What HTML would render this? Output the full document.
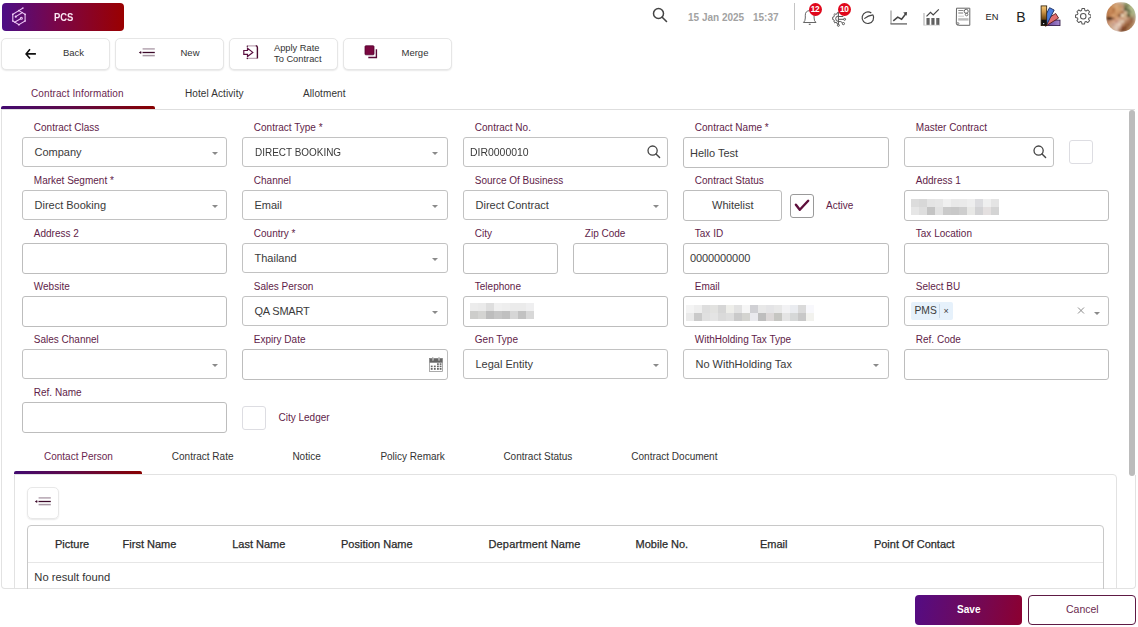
<!DOCTYPE html>
<html><head><meta charset="utf-8">
<style>
*{box-sizing:border-box;margin:0;padding:0}
html,body{width:1138px;height:627px;overflow:hidden;background:#fff;font-family:"Liberation Sans",sans-serif;color:#333}
.a{position:absolute}
.t{position:absolute;white-space:nowrap;line-height:1}
.btn{position:absolute;top:38px;height:32px;width:109px;border:1px solid #e6e6e6;border-radius:5px;background:#fff;box-shadow:0 1px 1.5px rgba(0,0,0,.09)}
.lbl{position:absolute;white-space:nowrap;line-height:1;font-size:10px;color:#5f1d49}
.box{position:absolute;height:30px;width:205px;border:1px solid #c2c2c2;border-radius:3px;background:#fff}
.val{position:absolute;white-space:nowrap;line-height:1;font-size:11px;color:#3a3a3a}
.caret{position:absolute;width:0;height:0;border-left:3px solid transparent;border-right:3px solid transparent;border-top:3px solid #8a8a8a}
.tab{position:absolute;white-space:nowrap;line-height:1;font-size:10px;letter-spacing:0.1px;color:#333}
.th{position:absolute;white-space:nowrap;line-height:1;font-size:11px;color:#2a2a2a;-webkit-text-stroke:0.25px #2a2a2a}
</style></head><body>
<div class="a" style="left:2px;top:3px;width:122px;height:28px;border-radius:4px;background:linear-gradient(90deg,#4c0e86 0%,#7a0648 45%,#9a0000 100%)"></div>
<svg class="a" style="left:11px;top:7px" width="17" height="19" viewBox="0 0 17 19">
 <g fill="none" stroke="#ecc4f4" stroke-width="1.1">
  <path d="M7.9 3.6 L14.1 7.4 L14.1 14 L7.9 17.7 L1.8 14 L1.8 7.4 Z"/>
  <path d="M7.9 3.6 L12 1 M4.75 9.65 L11.8 5.3 M3.1 15.5 L9.6 11.8"/>
  <circle cx="10.35" cy="11.3" r="1"/>
 </g>
 <g fill="#f0d0f8"><circle cx="4.75" cy="9.65" r="1.1"/><circle cx="7.9" cy="3.6" r="0.9"/><circle cx="7.9" cy="17.7" r="0.9"/><circle cx="1.8" cy="7.4" r="0.8"/><circle cx="14.1" cy="7.4" r="0.8"/><circle cx="1.8" cy="14" r="0.8"/><circle cx="14.1" cy="14" r="0.8"/><circle cx="12" cy="1" r="0.7"/></g>
</svg>
<div class="t" style="left:53.8px;top:11.6px;font-size:11.5px;font-weight:700;color:#fbe8f4;transform:scaleX(0.82);transform-origin:0 0">PCS</div>
<svg class="a" style="left:652px;top:7px" width="16" height="16" viewBox="0 0 16 16"><circle cx="6.5" cy="6.5" r="5" fill="none" stroke="#444" stroke-width="1.5"/><path d="M10.2 10.2 L14.5 14.5" stroke="#444" stroke-width="1.6" stroke-linecap="round"/></svg>
<div class="t" style="left:688px;top:12.5px;font-size:10px;font-weight:700;color:#a2a2a2">15 Jan 2025</div>
<div class="t" style="left:753px;top:12.5px;font-size:10px;font-weight:700;color:#a2a2a2">15:37</div>
<div class="a" style="left:794px;top:3px;width:1px;height:27px;background:#c4c4c4"></div>
<svg class="a" style="left:800px;top:8px" width="20" height="20" viewBox="0 0 20 20"><path d="M3.4 14.5 Q5.3 13.2 5.3 10 L5.3 7.2 Q5.3 2.8 9.7 2.6 Q14.1 2.8 14.1 7.2 L14.1 10 Q14.1 13.2 16 14.5 Z" fill="none" stroke="#666" stroke-width="1"/><path d="M8.8 16.3 L10.6 16.3" stroke="#666" stroke-width="1.2"/></svg>
<div class="a" style="left:809px;top:2.5px;width:13px;height:13px;border-radius:50%;background:#e0071b"></div>
<div class="t" style="left:810.8px;top:5px;font-size:8.3px;font-weight:700;color:#fff;letter-spacing:-0.4px">12</div>
<svg class="a" style="left:831px;top:10px" width="16" height="17" viewBox="0 0 16 17"><g fill="none" stroke="#555" stroke-width="1"><path d="M7.4 2.6 L6.3 2.7 L5.9 3.9 L4.9 4.4 L3.8 3.8 L2.9 4.7 L3.4 5.8 L2.9 6.8 L1.7 7.2 L1.7 9.5 L2.9 9.9 L3.4 10.9 L2.9 12 L3.8 12.9 L4.9 12.3 L5.9 12.8 L6.3 14 L7.4 14.1"/><path d="M7.4 6 A2.7 2.7 0 0 0 7.4 11.4"/><path d="M7.4 1.8 L7.4 14.3 M7.4 6.5 L12.3 6.5 M7.4 9.3 L12.6 9.3 M7.4 11.6 L9.8 11.6 L11.6 12.9"/><circle cx="13.6" cy="9.3" r="1"/><circle cx="12.4" cy="13.6" r="1.1"/><circle cx="7.4" cy="15.3" r="1"/></g></svg>
<div class="a" style="left:838px;top:2.5px;width:13px;height:13px;border-radius:50%;background:#e0071b"></div>
<div class="t" style="left:840.1px;top:5px;font-size:8.3px;font-weight:700;color:#fff;letter-spacing:-0.4px">10</div>
<svg class="a" style="left:860px;top:9px" width="16" height="16" viewBox="0 0 16 16"><path d="M11.31 4.01 A5.8 5.8 0 1 0 12.92 5.8" fill="none" stroke="#444" stroke-width="1.2"/><path d="M4.3 9.6 Q8.1 6.5 12.92 5.8" fill="none" stroke="#444" stroke-width="1.2"/></svg>
<svg class="a" style="left:889px;top:9px" width="20" height="17" viewBox="0 0 20 17"><path d="M2 1.5 L2 15" stroke="#aaa" stroke-width="1.4"/><path d="M1.5 14.9 L18 14.9" stroke="#777" stroke-width="1.5"/><path d="M4.3 11.8 L8.7 8.2 L12.6 10.2 L17 4.5" fill="none" stroke="#444" stroke-width="1.5"/><path d="M14.2 3.6 L18 3 L17.6 6.8 Z" fill="#444"/></svg>
<svg class="a" style="left:922px;top:8px" width="19" height="19" viewBox="0 0 19 19"><path d="M2 5 L2 17.2" stroke="#bbb" stroke-width="1.3"/><path d="M1.5 17.2 L18 17.2" stroke="#ccc" stroke-width="0.8"/><g fill="#555"><rect x="4.5" y="10" width="3.1" height="6.8"/><rect x="9.4" y="10" width="3.1" height="6.8"/><rect x="14.3" y="10" width="3.1" height="6.8"/></g><g stroke="#888" stroke-width="0.5"><path d="M6 10 L6 17 M10.9 10 L10.9 17 M15.8 10 L15.8 17"/></g><path d="M4.5 8.4 L8.5 4.3 L11.2 6.9 L16.8 1.3" fill="none" stroke="#444" stroke-width="1.2"/></svg>
<svg class="a" style="left:955px;top:7px" width="17" height="20" viewBox="0 0 17 20"><path d="M1.5 1.2 L14.8 1.2 L14.8 18.3 L3.5 18.3 Q1.3 18.3 1.3 16.3 Z" fill="#fff" stroke="#666" stroke-width="1"/><circle cx="2.9" cy="16.6" r="1" fill="none" stroke="#666" stroke-width="0.8"/><g stroke="#888" stroke-width="1"><path d="M3.3 3.5 L8.5 3.5"/></g><g stroke="#aaa" stroke-width="1.6"><path d="M3.3 6 L8.2 6"/></g><circle cx="11.2" cy="4.3" r="2" fill="none" stroke="#666" stroke-width="1"/><circle cx="11.6" cy="7.5" r="1.3" fill="none" stroke="#666" stroke-width="0.9"/><rect x="3.2" y="11.2" width="10.3" height="2.4" fill="#bbb"/><path d="M3.3 9.2 L9 9.2" stroke="#ccc" stroke-width="1"/></svg>
<div class="t" style="left:985.5px;top:12.8px;font-size:9.3px;font-weight:400;color:#222;letter-spacing:0px">EN</div>
<div class="t" style="left:1016.3px;top:10.4px;font-size:14px;color:#222">B</div>
<svg class="a" style="left:1040px;top:5px" width="22" height="22" viewBox="0 0 22 22"><defs><linearGradient id="gv" x1="0" y1="0" x2="0" y2="1"><stop offset="0" stop-color="#f4c878"/><stop offset="0.3" stop-color="#d09848"/><stop offset="0.68" stop-color="#6a4410"/><stop offset="0.72" stop-color="#111"/></linearGradient><linearGradient id="gp" x1="0" y1="0" x2="1" y2="0"><stop offset="0" stop-color="#5a3a90"/><stop offset="1" stop-color="#a888d0"/></linearGradient></defs><rect x="6.5" y="15.1" width="13.5" height="5.5" fill="url(#gp)" stroke="#2a1040" stroke-width="0.8"/><g transform="rotate(58 4 19)"><rect x="1.3" y="3.5" width="5.4" height="15.5" fill="#e07070" stroke="#5a1a1a" stroke-width="0.8"/></g><g transform="rotate(27 4 19.5)"><rect x="1.3" y="2" width="5.2" height="17" fill="#4a7ee0" stroke="#142a60" stroke-width="0.8"/></g><rect x="1.1" y="0.9" width="5.6" height="19.7" fill="url(#gv)" stroke="#2a1a05" stroke-width="0.8"/><circle cx="3.7" cy="18.6" r="0.7" fill="#fff"/></svg>
<svg class="a" style="left:1074.8px;top:8.3px" width="16.5" height="16.5" viewBox="0 0 18 18"><path d="M7.6 1.2 L10.4 1.2 L10.8 3.3 L12.1 3.9 L13.9 2.7 L15.9 4.7 L14.7 6.5 L15.3 7.8 L17.4 8.2 L17.4 11 L15.3 11.4 L14.7 12.7 L15.9 14.5 L13.9 16.5 L12.1 15.3 L10.8 15.9 L10.4 18 L7.6 18 L7.2 15.9 L5.9 15.3 L4.1 16.5 L2.1 14.5 L3.3 12.7 L2.7 11.4 L0.6 11 L0.6 8.2 L2.7 7.8 L3.3 6.5 L2.1 4.7 L4.1 2.7 L5.9 3.9 L7.2 3.3 Z" transform="translate(0 -0.6) scale(1 1)" fill="none" stroke="#555" stroke-width="1.1" stroke-linejoin="round"/><circle cx="9" cy="9" r="3" fill="none" stroke="#555" stroke-width="1.1"/></svg>
<svg class="a" style="left:1106px;top:2px" width="30" height="30" viewBox="0 0 30 30"><defs><clipPath id="cav"><circle cx="15" cy="15" r="14.9"/></clipPath><filter id="fb" filterUnits="userSpaceOnUse" x="-3" y="-3" width="36" height="36"><feGaussianBlur stdDeviation="0.9"/></filter></defs><g clip-path="url(#cav)"><g filter="url(#fb)"><rect x="0" y="0" width="3.05" height="3.05" fill="#c8a070"/><rect x="3" y="0" width="3.05" height="3.05" fill="#c8a070"/><rect x="6" y="0" width="3.05" height="3.05" fill="#c89870"/><rect x="9" y="0" width="3.05" height="3.05" fill="#d0a078"/><rect x="12" y="0" width="3.05" height="3.05" fill="#c8a080"/><rect x="15" y="0" width="3.05" height="3.05" fill="#b8a888"/><rect x="18" y="0" width="3.05" height="3.05" fill="#9a9a70"/><rect x="21" y="0" width="3.05" height="3.05" fill="#a0a878"/><rect x="24" y="0" width="3.05" height="3.05" fill="#a8b080"/><rect x="27" y="0" width="3.05" height="3.05" fill="#a8b080"/><rect x="0" y="3" width="3.05" height="3.05" fill="#c08050"/><rect x="3" y="3" width="3.05" height="3.05" fill="#c08050"/><rect x="6" y="3" width="3.05" height="3.05" fill="#d09a68"/><rect x="9" y="3" width="3.05" height="3.05" fill="#d8a878"/><rect x="12" y="3" width="3.05" height="3.05" fill="#c89868"/><rect x="15" y="3" width="3.05" height="3.05" fill="#c09070"/><rect x="18" y="3" width="3.05" height="3.05" fill="#7a7a50"/><rect x="21" y="3" width="3.05" height="3.05" fill="#a8b080"/><rect x="24" y="3" width="3.05" height="3.05" fill="#b0b888"/><rect x="27" y="3" width="3.05" height="3.05" fill="#b0b888"/><rect x="0" y="6" width="3.05" height="3.05" fill="#c08050"/><rect x="3" y="6" width="3.05" height="3.05" fill="#c88a58"/><rect x="6" y="6" width="3.05" height="3.05" fill="#b87848"/><rect x="9" y="6" width="3.05" height="3.05" fill="#d8a070"/><rect x="12" y="6" width="3.05" height="3.05" fill="#d0a070"/><rect x="15" y="6" width="3.05" height="3.05" fill="#c8a080"/><rect x="18" y="6" width="3.05" height="3.05" fill="#505838"/><rect x="21" y="6" width="3.05" height="3.05" fill="#98a070"/><rect x="24" y="6" width="3.05" height="3.05" fill="#b8c090"/><rect x="27" y="6" width="3.05" height="3.05" fill="#a8b088"/><rect x="0" y="9" width="3.05" height="3.05" fill="#b87848"/><rect x="3" y="9" width="3.05" height="3.05" fill="#d09060"/><rect x="6" y="9" width="3.05" height="3.05" fill="#c08050"/><rect x="9" y="9" width="3.05" height="3.05" fill="#d09868"/><rect x="12" y="9" width="3.05" height="3.05" fill="#c89060"/><rect x="15" y="9" width="3.05" height="3.05" fill="#a87048"/><rect x="18" y="9" width="3.05" height="3.05" fill="#d8b898"/><rect x="21" y="9" width="3.05" height="3.05" fill="#808860"/><rect x="24" y="9" width="3.05" height="3.05" fill="#a8b080"/><rect x="27" y="9" width="3.05" height="3.05" fill="#b0b890"/><rect x="0" y="12" width="3.05" height="3.05" fill="#b07040"/><rect x="3" y="12" width="3.05" height="3.05" fill="#c88858"/><rect x="6" y="12" width="3.05" height="3.05" fill="#d8a070"/><rect x="9" y="12" width="3.05" height="3.05" fill="#c89060"/><rect x="12" y="12" width="3.05" height="3.05" fill="#986040"/><rect x="15" y="12" width="3.05" height="3.05" fill="#e8d0b0"/><rect x="18" y="12" width="3.05" height="3.05" fill="#c8a880"/><rect x="21" y="12" width="3.05" height="3.05" fill="#605838"/><rect x="24" y="12" width="3.05" height="3.05" fill="#b0a878"/><rect x="27" y="12" width="3.05" height="3.05" fill="#a8a080"/><rect x="0" y="15" width="3.05" height="3.05" fill="#704020"/><rect x="3" y="15" width="3.05" height="3.05" fill="#503020"/><rect x="6" y="15" width="3.05" height="3.05" fill="#a87050"/><rect x="9" y="15" width="3.05" height="3.05" fill="#d8a078"/><rect x="12" y="15" width="3.05" height="3.05" fill="#d0a080"/><rect x="15" y="15" width="3.05" height="3.05" fill="#c89878"/><rect x="18" y="15" width="3.05" height="3.05" fill="#d0a888"/><rect x="21" y="15" width="3.05" height="3.05" fill="#b88868"/><rect x="24" y="15" width="3.05" height="3.05" fill="#906848"/><rect x="27" y="15" width="3.05" height="3.05" fill="#b09878"/><rect x="0" y="18" width="3.05" height="3.05" fill="#b88060"/><rect x="3" y="18" width="3.05" height="3.05" fill="#c89070"/><rect x="6" y="18" width="3.05" height="3.05" fill="#d8a888"/><rect x="9" y="18" width="3.05" height="3.05" fill="#c89080"/><rect x="12" y="18" width="3.05" height="3.05" fill="#d8b8a0"/><rect x="15" y="18" width="3.05" height="3.05" fill="#e0c8b0"/><rect x="18" y="18" width="3.05" height="3.05" fill="#b88868"/><rect x="21" y="18" width="3.05" height="3.05" fill="#a87050"/><rect x="24" y="18" width="3.05" height="3.05" fill="#986040"/><rect x="27" y="18" width="3.05" height="3.05" fill="#b89070"/><rect x="0" y="21" width="3.05" height="3.05" fill="#c89070"/><rect x="3" y="21" width="3.05" height="3.05" fill="#d0a888"/><rect x="6" y="21" width="3.05" height="3.05" fill="#c8a090"/><rect x="9" y="21" width="3.05" height="3.05" fill="#e0c0a8"/><rect x="12" y="21" width="3.05" height="3.05" fill="#e8d0c0"/><rect x="15" y="21" width="3.05" height="3.05" fill="#c09070"/><rect x="18" y="21" width="3.05" height="3.05" fill="#a06840"/><rect x="21" y="21" width="3.05" height="3.05" fill="#905838"/><rect x="24" y="21" width="3.05" height="3.05" fill="#a87850"/><rect x="27" y="21" width="3.05" height="3.05" fill="#c0a080"/><rect x="0" y="24" width="3.05" height="3.05" fill="#c8a080"/><rect x="3" y="24" width="3.05" height="3.05" fill="#c8a080"/><rect x="6" y="24" width="3.05" height="3.05" fill="#d8b8a0"/><rect x="9" y="24" width="3.05" height="3.05" fill="#e0c8b8"/><rect x="12" y="24" width="3.05" height="3.05" fill="#d0a890"/><rect x="15" y="24" width="3.05" height="3.05" fill="#905030"/><rect x="18" y="24" width="3.05" height="3.05" fill="#804828"/><rect x="21" y="24" width="3.05" height="3.05" fill="#a07048"/><rect x="24" y="24" width="3.05" height="3.05" fill="#b08868"/><rect x="27" y="24" width="3.05" height="3.05" fill="#b08868"/><rect x="0" y="27" width="3.05" height="3.05" fill="#d0b098"/><rect x="3" y="27" width="3.05" height="3.05" fill="#d0b098"/><rect x="6" y="27" width="3.05" height="3.05" fill="#d0b098"/><rect x="9" y="27" width="3.05" height="3.05" fill="#d8c0b0"/><rect x="12" y="27" width="3.05" height="3.05" fill="#a87050"/><rect x="15" y="27" width="3.05" height="3.05" fill="#704020"/><rect x="18" y="27" width="3.05" height="3.05" fill="#905838"/><rect x="21" y="27" width="3.05" height="3.05" fill="#b08058"/><rect x="24" y="27" width="3.05" height="3.05" fill="#b08058"/><rect x="27" y="27" width="3.05" height="3.05" fill="#b08058"/><circle cx="14" cy="13.5" r="1.1" fill="#7a4a20"/><circle cx="15.6" cy="13" r="0.7" fill="#f8f0e0"/><circle cx="22" cy="4" r="0.8" fill="#282818"/><circle cx="22.5" cy="8" r="0.9" fill="#282818"/><circle cx="24.5" cy="9.5" r="0.7" fill="#282818"/><circle cx="23.5" cy="13.5" r="0.8" fill="#282818"/><circle cx="8.5" cy="7.5" r="0.7" fill="#8a5028"/><circle cx="5" cy="11" r="0.7" fill="#8a5028"/><ellipse cx="4" cy="16.5" rx="2.5" ry="1.2" fill="#3e2414"/></g></g></svg>
<div class="btn" style="left:1px"></div>
<div class="btn" style="left:115px"></div>
<div class="btn" style="left:229px"></div>
<div class="btn" style="left:343px"></div>
<svg class="a" style="left:24px;top:47px" width="14" height="14" viewBox="0 0 14 14"><path d="M6 2.3 L2.1 6.9 L6 11.5 M2.4 6.9 L11.9 6.9" fill="none" stroke="#111" stroke-width="1.6"/></svg>
<svg class="a" style="left:138px;top:47px" width="18" height="10" viewBox="0 0 18 10"><path d="M4.6 1.9 L16.8 1.9" stroke="#b4a4b0" stroke-width="1.5"/><path d="M4.4 5.5 L16.8 5.5" stroke="#3c0a2a" stroke-width="1.3"/><path d="M3 5.5 L4.4 5.5" stroke="#c8b0c0" stroke-width="1"/><path d="M4.6 8.6 L16.8 8.6" stroke="#a898a4" stroke-width="1.5"/><path d="M0.8 5.5 L3.2 4 L3.2 7 Z" fill="#3c0a2a"/></svg>
<svg class="a" style="left:242px;top:44px" width="18" height="17" viewBox="0 0 18 17"><path d="M5.3 1.8 L14.5 1.8 M5.3 14.4 L15 14.4" stroke="#c0a8b8" stroke-width="1.3"/><path d="M13.8 1.6 Q15.4 1.8 15.4 3.6 L15.4 14.6" fill="none" stroke="#4a0a30" stroke-width="1.4"/><circle cx="5.3" cy="2.3" r="0.7" fill="#4a0a30"/><circle cx="5.3" cy="14.5" r="0.7" fill="#4a0a30"/><path d="M1.8 6.5 L5.5 6.5 L5.5 4.2 L10.8 8.4 L5.5 12.5 L5.5 10.3 L1.8 10.3 Z" fill="none" stroke="#5a1040" stroke-width="1.2" stroke-linejoin="miter"/></svg>
<svg class="a" style="left:363px;top:44px" width="16" height="16" viewBox="0 0 16 16"><rect x="2" y="1.8" width="9" height="9" rx="0.8" fill="#7a0840" stroke="#52002e" stroke-width="0.8"/><path d="M5.3 13.5 L13.4 13.5 L13.4 5.3" fill="none" stroke="#5a0a38" stroke-width="1.4"/></svg>
<div class="t" style="left:63px;top:48px;font-size:9.5px;color:#333">Back</div>
<div class="t" style="left:180.5px;top:48px;font-size:9.5px;color:#333">New</div>
<div class="t" style="left:274px;top:43.7px;font-size:9.3px;color:#333">Apply Rate</div>
<div class="t" style="left:274px;top:54.5px;font-size:9.3px;color:#333">To Contract</div>
<div class="t" style="left:401.5px;top:48px;font-size:9.5px;color:#333">Merge</div>
<div class="tab" style="left:31px;top:88.6px;color:#6b1f4f">Contract Information</div>
<div class="tab" style="left:185px;top:88.6px">Hotel Activity</div>
<div class="tab" style="left:303px;top:88.6px">Allotment</div>
<div class="a" style="left:1px;top:106px;width:154px;height:3px;border-radius:2px 2px 0 0;background:linear-gradient(90deg,#420a70,#5e0a48 45%,#880000)"></div>
<div class="a" style="left:1px;top:109px;width:1135px;height:480px;border:1px solid #e2e2e2;border-top-color:#dedede;border-radius:0 0 4px 4px"></div>
<div class="a" style="left:1135px;top:108px;width:3px;height:367px;background:#fff"></div>
<div class="a" style="left:1129px;top:109.5px;width:6px;height:366px;border-radius:3px;background:#bcbcbc"></div>
<div class="lbl" style="left:33.8px;top:123.4px">Contract Class</div>
<div class="box" style="left:22.0px;top:137px;width:205px;"></div>
<div class="val" style="left:34.5px;top:146.9px;">Company</div>
<div class="caret" style="left:212.0px;top:152px"></div>
<div class="lbl" style="left:253.8px;top:123.4px">Contract Type *</div>
<div class="box" style="left:242.0px;top:137px;width:206px;"></div>
<div class="val" style="left:254.5px;top:146.9px;transform:scaleX(0.905);transform-origin:0 0">DIRECT BOOKING</div>
<div class="caret" style="left:432.0px;top:152px"></div>
<div class="lbl" style="left:474.8px;top:123.4px">Contract No.</div>
<div class="box" style="left:463.0px;top:137px;width:205px;"></div>
<div class="val" style="left:470.0px;top:146.6px;transform:scaleX(0.95);transform-origin:0 0">DIR0000010</div>
<svg class="a" style="left:647px;top:145px" width="14" height="14" viewBox="0 0 14 14"><circle cx="5.6" cy="5.6" r="4.6" fill="none" stroke="#444" stroke-width="1.3"/><path d="M9 9 L12.6 12.6" stroke="#444" stroke-width="1.4" stroke-linecap="round"/></svg>
<div class="lbl" style="left:694.8px;top:123.4px">Contract Name *</div>
<div class="box" style="left:683.0px;top:137px;width:206px;height:31px;border-color:#bdbdbd"></div>
<div class="val" style="left:690.0px;top:147.9px;">Hello Test</div>
<div class="lbl" style="left:915.8px;top:123.4px">Master Contract</div>
<div class="box" style="left:904.0px;top:137px;width:150px;"></div>
<svg class="a" style="left:1033px;top:145px" width="14" height="14" viewBox="0 0 14 14"><circle cx="5.6" cy="5.6" r="4.6" fill="none" stroke="#444" stroke-width="1.3"/><path d="M9 9 L12.6 12.6" stroke="#444" stroke-width="1.4" stroke-linecap="round"/></svg>
<div class="a" style="left:1069px;top:140px;width:24px;height:23.5px;border:1px solid #dddde2;border-radius:3px"></div>
<div class="lbl" style="left:33.8px;top:176.4px">Market Segment *</div>
<div class="box" style="left:22.0px;top:190px;width:205px;"></div>
<div class="val" style="left:34.5px;top:199.9px;">Direct Booking</div>
<div class="caret" style="left:212.0px;top:205px"></div>
<div class="lbl" style="left:253.8px;top:176.4px">Channel</div>
<div class="box" style="left:242.0px;top:190px;width:206px;"></div>
<div class="val" style="left:254.5px;top:199.9px;">Email</div>
<div class="caret" style="left:432.0px;top:205px"></div>
<div class="lbl" style="left:474.8px;top:176.4px">Source Of Business</div>
<div class="box" style="left:463.0px;top:190px;width:205px;"></div>
<div class="val" style="left:475.5px;top:199.9px;">Direct Contract</div>
<div class="caret" style="left:653.0px;top:205px"></div>
<div class="lbl" style="left:694.8px;top:176.4px">Contract Status</div>
<div class="box" style="left:683px;top:190px;width:99px;height:31px;border-color:#bdbdbd"></div>
<div class="val" style="left:712px;top:199.8px">Whitelist</div>
<div class="a" style="left:790px;top:194px;width:24px;height:24px;border:1px solid #9a9a9a;border-radius:3px"></div>
<svg class="a" style="left:790px;top:194px" width="24" height="24" viewBox="0 0 24 24"><path d="M5.9 10.7 L9.8 15.8 L18.2 6.8" fill="none" stroke="#5e0f3c" stroke-width="2.4" stroke-linecap="round" stroke-linejoin="round"/></svg>
<div class="lbl" style="left:826px;top:201.2px">Active</div>
<div class="lbl" style="left:915.8px;top:176.4px">Address 1</div>
<div class="box" style="left:904.0px;top:190px;width:205px;height:31px;border-color:#bdbdbd"></div>
<div class="a" style="left:911px;top:199px;width:8px;height:8px;background:#dcdcdc"></div>
<div class="a" style="left:919px;top:199px;width:8px;height:8px;background:#d8d8d8"></div>
<div class="a" style="left:927px;top:199px;width:8px;height:8px;background:#e4e4e4"></div>
<div class="a" style="left:935px;top:199px;width:8px;height:8px;background:#e6e6e6"></div>
<div class="a" style="left:943px;top:199px;width:8px;height:8px;background:#f0f0f0"></div>
<div class="a" style="left:951px;top:199px;width:8px;height:8px;background:#e9e9e9"></div>
<div class="a" style="left:959px;top:199px;width:8px;height:8px;background:#eaeaea"></div>
<div class="a" style="left:967px;top:199px;width:8px;height:8px;background:#eeeeee"></div>
<div class="a" style="left:975px;top:199px;width:8px;height:8px;background:#dcdcdf"></div>
<div class="a" style="left:983px;top:199px;width:8px;height:8px;background:#efefef"></div>
<div class="a" style="left:991px;top:199px;width:8px;height:8px;background:#e4e4e4"></div>
<div class="a" style="left:911px;top:207px;width:8px;height:8px;background:#e6e6e6"></div>
<div class="a" style="left:919px;top:207px;width:8px;height:8px;background:#dedede"></div>
<div class="a" style="left:927px;top:207px;width:8px;height:8px;background:#c4c4c4"></div>
<div class="a" style="left:935px;top:207px;width:8px;height:8px;background:#e2e2e2"></div>
<div class="a" style="left:943px;top:207px;width:8px;height:8px;background:#cacaca"></div>
<div class="a" style="left:951px;top:207px;width:8px;height:8px;background:#c8c8c8"></div>
<div class="a" style="left:959px;top:207px;width:8px;height:8px;background:#cecece"></div>
<div class="a" style="left:967px;top:207px;width:8px;height:8px;background:#e8e8e6"></div>
<div class="a" style="left:975px;top:207px;width:8px;height:8px;background:#d2d2d4"></div>
<div class="a" style="left:983px;top:207px;width:8px;height:8px;background:#e4e0e0"></div>
<div class="a" style="left:991px;top:207px;width:8px;height:8px;background:#d4d4d4"></div>
<div class="lbl" style="left:33.8px;top:229.4px">Address 2</div>
<div class="box" style="left:22.0px;top:243px;width:205px;height:31px;border-color:#bdbdbd"></div>
<div class="lbl" style="left:253.8px;top:229.4px">Country *</div>
<div class="box" style="left:242.0px;top:243px;width:206px;"></div>
<div class="val" style="left:254.5px;top:252.9px;">Thailand</div>
<div class="caret" style="left:432.0px;top:258px"></div>
<div class="lbl" style="left:474.8px;top:229.4px">City</div>
<div class="box" style="left:463.0px;top:243px;width:95px;height:31px;border-color:#bdbdbd"></div>
<div class="lbl" style="left:584.8px;top:229.4px">Zip Code</div>
<div class="box" style="left:573.0px;top:243px;width:95px;height:31px;border-color:#bdbdbd"></div>
<div class="lbl" style="left:694.8px;top:229.4px">Tax ID</div>
<div class="box" style="left:683.0px;top:243px;width:206px;height:31px;border-color:#bdbdbd"></div>
<div class="val" style="left:690.0px;top:252.9px;letter-spacing:-0.1px">0000000000</div>
<div class="lbl" style="left:915.8px;top:229.4px">Tax Location</div>
<div class="box" style="left:904.0px;top:243px;width:205px;height:31px;border-color:#bdbdbd"></div>
<div class="lbl" style="left:33.8px;top:282.4px">Website</div>
<div class="box" style="left:22.0px;top:296px;width:205px;height:31px;border-color:#bdbdbd"></div>
<div class="lbl" style="left:253.8px;top:282.4px">Sales Person</div>
<div class="box" style="left:242.0px;top:296px;width:206px;"></div>
<div class="val" style="left:254.5px;top:305.9px;letter-spacing:-0.2px">QA SMART</div>
<div class="caret" style="left:432.0px;top:311px"></div>
<div class="lbl" style="left:474.8px;top:282.4px">Telephone</div>
<div class="box" style="left:463.0px;top:296px;width:205px;height:31px;border-color:#bdbdbd"></div>
<div class="a" style="left:470px;top:303px;width:8px;height:8px;background:#ececec"></div>
<div class="a" style="left:478px;top:303px;width:8px;height:8px;background:#eaeaea"></div>
<div class="a" style="left:486px;top:303px;width:8px;height:8px;background:#dedede"></div>
<div class="a" style="left:494px;top:303px;width:8px;height:8px;background:#f0f0f0"></div>
<div class="a" style="left:502px;top:303px;width:8px;height:8px;background:#eeeeee"></div>
<div class="a" style="left:510px;top:303px;width:8px;height:8px;background:#ebebeb"></div>
<div class="a" style="left:518px;top:303px;width:8px;height:8px;background:#ebebeb"></div>
<div class="a" style="left:526px;top:303px;width:8px;height:8px;background:#efeff0"></div>
<div class="a" style="left:470px;top:311px;width:8px;height:8px;background:#cdcdcb"></div>
<div class="a" style="left:478px;top:311px;width:8px;height:8px;background:#d4d4d2"></div>
<div class="a" style="left:486px;top:311px;width:8px;height:8px;background:#bdbdbd"></div>
<div class="a" style="left:494px;top:311px;width:8px;height:8px;background:#c6c6c6"></div>
<div class="a" style="left:502px;top:311px;width:8px;height:8px;background:#c0c0c0"></div>
<div class="a" style="left:510px;top:311px;width:8px;height:8px;background:#d6d6d6"></div>
<div class="a" style="left:518px;top:311px;width:8px;height:8px;background:#c2c2c2"></div>
<div class="a" style="left:526px;top:311px;width:8px;height:8px;background:#d8d8d8"></div>
<div class="lbl" style="left:694.8px;top:282.4px">Email</div>
<div class="box" style="left:683.0px;top:296px;width:206px;height:31px;border-color:#bdbdbd"></div>
<div class="a" style="left:686px;top:305px;width:8px;height:8px;background:#f4f4f4"></div>
<div class="a" style="left:694px;top:305px;width:8px;height:8px;background:#eeeeee"></div>
<div class="a" style="left:702px;top:305px;width:8px;height:8px;background:#dedede"></div>
<div class="a" style="left:710px;top:305px;width:8px;height:8px;background:#e2e2e0"></div>
<div class="a" style="left:718px;top:305px;width:8px;height:8px;background:#d6d6d6"></div>
<div class="a" style="left:726px;top:305px;width:8px;height:8px;background:#eeeeea"></div>
<div class="a" style="left:734px;top:305px;width:8px;height:8px;background:#e2e2e2"></div>
<div class="a" style="left:742px;top:305px;width:8px;height:8px;background:#f6f6f6"></div>
<div class="a" style="left:750px;top:305px;width:8px;height:8px;background:#d0d0d4"></div>
<div class="a" style="left:758px;top:305px;width:8px;height:8px;background:#e8e8e8"></div>
<div class="a" style="left:766px;top:305px;width:8px;height:8px;background:#e4e4e6"></div>
<div class="a" style="left:774px;top:305px;width:8px;height:8px;background:#e8e8e8"></div>
<div class="a" style="left:782px;top:305px;width:8px;height:8px;background:#f2f2f4"></div>
<div class="a" style="left:790px;top:305px;width:8px;height:8px;background:#eaecf0"></div>
<div class="a" style="left:798px;top:305px;width:8px;height:8px;background:#dadada"></div>
<div class="a" style="left:806px;top:305px;width:8px;height:8px;background:#f8f8fc"></div>
<div class="a" style="left:686px;top:313px;width:8px;height:8px;background:#eaeaea"></div>
<div class="a" style="left:694px;top:313px;width:8px;height:8px;background:#cacaca"></div>
<div class="a" style="left:702px;top:313px;width:8px;height:8px;background:#e0e0e0"></div>
<div class="a" style="left:710px;top:313px;width:8px;height:8px;background:#e4e4e4"></div>
<div class="a" style="left:718px;top:313px;width:8px;height:8px;background:#dadada"></div>
<div class="a" style="left:726px;top:313px;width:8px;height:8px;background:#dedede"></div>
<div class="a" style="left:734px;top:313px;width:8px;height:8px;background:#cacaca"></div>
<div class="a" style="left:742px;top:313px;width:8px;height:8px;background:#d4d4d0"></div>
<div class="a" style="left:750px;top:313px;width:8px;height:8px;background:#eaeaee"></div>
<div class="a" style="left:758px;top:313px;width:8px;height:8px;background:#bebebe"></div>
<div class="a" style="left:766px;top:313px;width:8px;height:8px;background:#dcd8d8"></div>
<div class="a" style="left:774px;top:313px;width:8px;height:8px;background:#c6c6c2"></div>
<div class="a" style="left:782px;top:313px;width:8px;height:8px;background:#e4e4e4"></div>
<div class="a" style="left:790px;top:313px;width:8px;height:8px;background:#d6d8d8"></div>
<div class="a" style="left:798px;top:313px;width:8px;height:8px;background:#c8c8c8"></div>
<div class="a" style="left:806px;top:313px;width:8px;height:8px;background:#f2f2ee"></div>
<div class="lbl" style="left:915.8px;top:282.4px">Select BU</div>
<div class="box" style="left:904.0px;top:296px;width:205px;"></div>
<div class="a" style="left:910.5px;top:302px;width:42.5px;height:18px;border-radius:2px;background:#e6f1fb"></div>
<div class="val" style="left:914.5px;top:306px;font-size:10.3px">PMS</div>
<div class="a" style="left:939px;top:304px;width:1px;height:14px;background:#c9d9ea"></div>
<div class="t" style="left:943.5px;top:306.5px;font-size:9px;color:#444">&#215;</div>
<svg class="a" style="left:1077px;top:307px" width="8" height="7" viewBox="0 0 8 7"><path d="M1 0.5 L7 6.5 M7 0.5 L1 6.5" stroke="#8c8c8c" stroke-width="1"/></svg>
<div class="caret" style="left:1094px;top:311.5px"></div>
<div class="lbl" style="left:33.8px;top:335.4px">Sales Channel</div>
<div class="box" style="left:22.0px;top:349px;width:205px;"></div>
<div class="caret" style="left:212.0px;top:364px"></div>
<div class="lbl" style="left:253.8px;top:335.4px">Expiry Date</div>
<div class="box" style="left:242.0px;top:349px;width:206px;height:31px;border-color:#bdbdbd"></div>
<svg class="a" style="left:429px;top:357px" width="14" height="15" viewBox="0 0 14 15"><rect x="0.6" y="1.5" width="12.8" height="13" fill="#fff" stroke="#888" stroke-width="0.7"/><rect x="0.6" y="1.5" width="12.8" height="4.2" fill="#666"/><path d="M3.8 0.3 L3.8 3.6 M10 0.3 L10 3.6" stroke="#fff" stroke-width="1.6"/><path d="M3.8 0.3 L3.8 3.6 M10 0.3 L10 3.6" stroke="#555" stroke-width="0.8"/><g fill="#666"><rect x="8" y="6.3" width="1.8" height="1.6"/><rect x="10.7" y="6.3" width="1.8" height="1.6"/><rect x="1.8" y="8.6" width="1.8" height="1.6"/><rect x="4.9" y="8.6" width="1.8" height="1.6"/><rect x="8" y="8.6" width="1.8" height="1.6"/><rect x="10.7" y="8.6" width="1.8" height="1.6"/><rect x="1.8" y="11" width="1.8" height="1.8"/><rect x="4.9" y="11" width="1.8" height="1.8"/><rect x="8" y="11" width="1.8" height="1.8"/><rect x="10.7" y="11" width="1.8" height="1.8"/></g></svg>
<div class="lbl" style="left:474.8px;top:335.4px">Gen Type</div>
<div class="box" style="left:463.0px;top:349px;width:205px;"></div>
<div class="val" style="left:475.5px;top:358.9px;">Legal Entity</div>
<div class="caret" style="left:653.0px;top:364px"></div>
<div class="lbl" style="left:694.8px;top:335.4px">WithHolding Tax Type</div>
<div class="box" style="left:683.0px;top:349px;width:206px;"></div>
<div class="val" style="left:695.5px;top:358.9px;">No WithHolding Tax</div>
<div class="caret" style="left:873.0px;top:364px"></div>
<div class="lbl" style="left:915.8px;top:335.4px">Ref. Code</div>
<div class="box" style="left:904.0px;top:349px;width:205px;height:31px;border-color:#bdbdbd"></div>
<div class="lbl" style="left:33.8px;top:388.4px">Ref. Name</div>
<div class="box" style="left:22.0px;top:402px;width:205px;height:31px;border-color:#bdbdbd"></div>
<div class="a" style="left:242px;top:406px;width:24px;height:23.5px;border:1px solid #dddde2;border-radius:3px"></div>
<div class="lbl" style="left:278.5px;top:412.6px">City Ledger</div>
<div class="tab" style="left:44px;top:451.9px;letter-spacing:0px;color:#6b1f4f">Contact Person</div>
<div class="tab" style="left:171.8px;top:451.9px;letter-spacing:0px">Contract Rate</div>
<div class="tab" style="left:292.4px;top:451.9px;letter-spacing:0px">Notice</div>
<div class="tab" style="left:380.4px;top:451.9px;letter-spacing:0px">Policy Remark</div>
<div class="tab" style="left:503.4px;top:451.9px;letter-spacing:0px">Contract Status</div>
<div class="tab" style="left:631.3px;top:451.9px;letter-spacing:0px">Contract Document</div>
<div class="a" style="left:14px;top:470.5px;width:128px;height:3px;border-radius:2px 2px 0 0;background:linear-gradient(90deg,#420a70,#5e0a48 45%,#880000)"></div>
<div class="a" style="left:14px;top:474px;width:1103px;height:120px;border:1px solid #e2e2e2;border-radius:0 4px 0 0"></div>
<div class="a" style="left:27px;top:487px;width:32px;height:32px;border:1px solid #e8e8e8;border-radius:5px;box-shadow:0 1px 1.5px rgba(0,0,0,.09)"></div>
<svg class="a" style="left:33.5px;top:496px" width="18" height="10" viewBox="0 0 18 10"><path d="M4.6 1.9 L16.8 1.9" stroke="#b4a4b0" stroke-width="1.5"/><path d="M4.4 5.5 L16.8 5.5" stroke="#3c0a2a" stroke-width="1.3"/><path d="M3 5.5 L4.4 5.5" stroke="#c8b0c0" stroke-width="1"/><path d="M4.6 8.6 L16.8 8.6" stroke="#a898a4" stroke-width="1.5"/><path d="M0.8 5.5 L3.2 4 L3.2 7 Z" fill="#3c0a2a"/></svg>
<div class="a" style="left:27px;top:525px;width:1077px;height:80px;border:1px solid #c8c8c8;border-radius:4px 4px 0 0"></div>
<div class="a" style="left:28px;top:562px;width:1075px;height:1px;background:#e6e6e6"></div>
<div class="th" style="left:55px;top:538.8px">Picture</div>
<div class="th" style="left:122.6px;top:538.8px">First Name</div>
<div class="th" style="left:232.2px;top:538.8px">Last Name</div>
<div class="th" style="left:341px;top:538.8px">Position Name</div>
<div class="th" style="left:488.5px;top:538.8px;letter-spacing:0.15px">Department Name</div>
<div class="th" style="left:635.6px;top:538.8px">Mobile No.</div>
<div class="th" style="left:760px;top:538.8px">Email</div>
<div class="th" style="left:873.9px;top:538.8px">Point Of Contact</div>
<div class="th" style="left:34.3px;top:571.6px;font-size:11.2px;-webkit-text-stroke:0;color:#333">No result found</div>
<div class="a" style="left:0;top:589px;width:1138px;height:38px;background:#fff"></div>
<div class="a" style="left:915px;top:595px;width:107px;height:29.5px;border-radius:4px;background:linear-gradient(100deg,#540c84 0%,#6e0a5c 50%,#8c0030 100%)"></div>
<div class="t" style="left:957px;top:604.8px;font-size:10.1px;font-weight:700;color:#fff">Save</div>
<div class="a" style="left:1028px;top:595px;width:108px;height:29.5px;border:1.5px solid #5e1a44;border-radius:4px"></div>
<div class="t" style="left:1066px;top:603.6px;font-size:10.5px;color:#6b2a50">Cancel</div>
</body></html>
